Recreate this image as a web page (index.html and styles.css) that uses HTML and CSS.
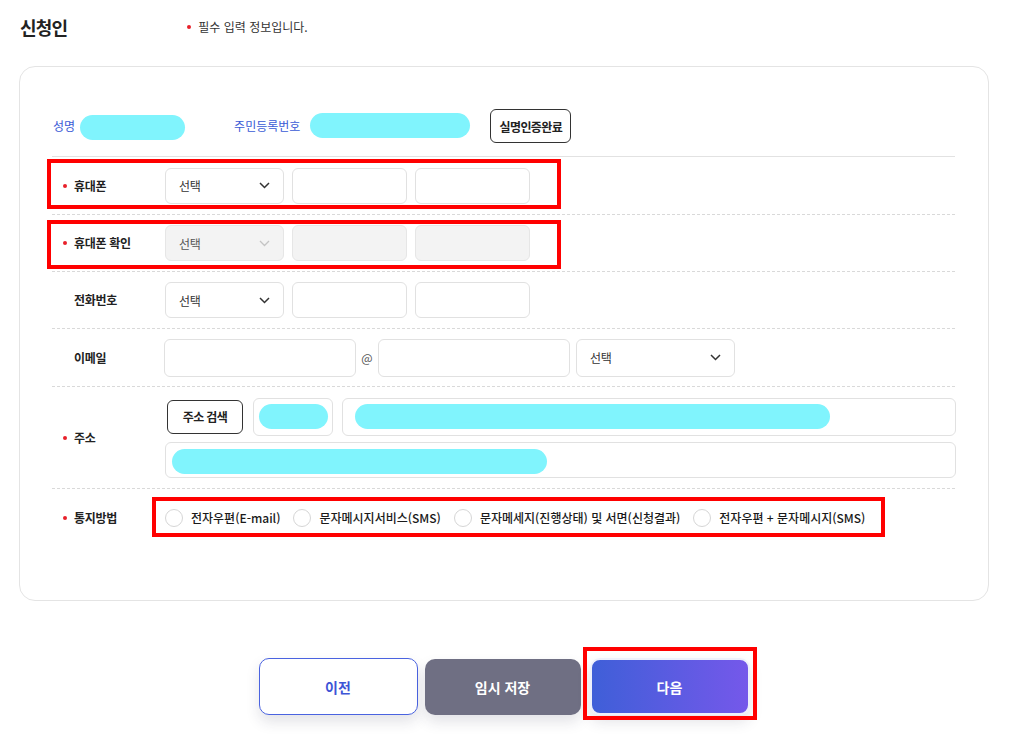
FILE: index.html
```html
<!DOCTYPE html>
<html lang="ko">
<head>
<meta charset="utf-8">
<title>신청인</title>
<link rel="stylesheet" href="styles.css">
</head>
<body>
<div class="page">
  <div class="head">
    <h2 class="title">신청인</h2>
    <p class="notice"><span class="dot"></span>필수 입력 정보입니다.</p>
  </div>

  <div class="card">
    <div class="info">
      <span class="info-label">성명</span>
      <span class="pill pill-name"></span>
      <span class="info-label info-label-id">주민등록번호</span>
      <span class="pill pill-id"></span>
      <button class="btn-outline btn-verify">실명인증완료</button>
    </div>

    <div class="row row-58">
      <div class="label"><span class="dot"></span>휴대폰</div>
      <div class="fields">
        <div class="select w-sel"><span>선택</span><svg width="11" height="7" viewBox="0 0 11 7"><polyline points="1,1 5.5,5.5 10,1" fill="none" stroke="#333" stroke-width="1.5"/></svg></div>
        <div class="input w-num"></div>
        <div class="input w-num"></div>
      </div>
      <div class="hl hl-phone"></div>
    </div>

    <div class="row">
      <div class="label"><span class="dot"></span>휴대폰 확인</div>
      <div class="fields">
        <div class="select w-sel disabled"><span>선택</span><svg width="11" height="7" viewBox="0 0 11 7"><polyline points="1,1 5.5,5.5 10,1" fill="none" stroke="#c4c4c4" stroke-width="1.3"/></svg></div>
        <div class="input w-num disabled"></div>
        <div class="input w-num disabled"></div>
      </div>
      <div class="hl hl-phone2"></div>
    </div>

    <div class="row">
      <div class="label"><span class="nodot"></span>전화번호</div>
      <div class="fields">
        <div class="select w-sel"><span>선택</span><svg width="11" height="7" viewBox="0 0 11 7"><polyline points="1,1 5.5,5.5 10,1" fill="none" stroke="#333" stroke-width="1.5"/></svg></div>
        <div class="input w-num"></div>
        <div class="input w-num"></div>
      </div>
    </div>

    <div class="row row-58">
      <div class="label"><span class="nodot"></span>이메일</div>
      <div class="fields fields-mail">
        <div class="input tall w-mail"></div>
        <span class="at">@</span>
        <div class="input tall w-mail"></div>
        <div class="select tall w-mailsel"><span>선택</span><svg width="11" height="7" viewBox="0 0 11 7"><polyline points="1,1 5.5,5.5 10,1" fill="none" stroke="#333" stroke-width="1.5"/></svg></div>
      </div>
    </div>

    <div class="row row-addr">
      <div class="label"><span class="dot"></span>주소</div>
      <div class="addr">
        <div class="addr-line">
          <button class="btn-outline btn-search">주소 검색</button>
          <div class="input tall w-zip"><span class="pill pill-zip"></span></div>
          <div class="input tall w-addr1"><span class="pill pill-addr1"></span></div>
        </div>
        <div class="input w-addr2"><span class="pill pill-addr2"></span></div>
      </div>
    </div>

    <div class="row row-last">
      <div class="label"><span class="dot"></span>통지방법</div>
      <div class="radios">
        <label class="radio"><span class="circle"></span>전자우편(E-mail)</label>
        <label class="radio"><span class="circle"></span>문자메시지서비스(SMS)</label>
        <label class="radio"><span class="circle"></span>문자메세지(진행상태) 및 서면(신청결과)</label>
        <label class="radio"><span class="circle"></span>전자우편 + 문자메시지(SMS)</label>
      </div>
      <div class="hl hl-radio"></div>
    </div>
  </div>

  <div class="actions">
    <button class="btn btn-prev">이전</button>
    <button class="btn btn-save">임시 저장</button>
    <div class="next-wrap">
      <button class="btn btn-next">다음</button>
      <div class="hl hl-next"></div>
    </div>
  </div>
</div>
</body>
</html>
```

FILE: styles.css
```css
* { box-sizing: border-box; }
html, body { margin: 0; padding: 0; background: #fff; }
body {
  font-family: "Noto Sans CJK KR", "Noto Sans", sans-serif;
  color: #222;
}
.page {
  width: 1016px;
  padding: 0 27px 24px 19px;
}
.head {
  height: 54px;
  display: flex;
  align-items: center;
  padding-left: 1px;
}
.title {
  margin: 0;
  font-size: 18px;
  font-weight: 700;
  letter-spacing: -0.8px;
  line-height: 22px;
  color: #222;
}
.notice {
  margin: 0 0 0 120px;
  font-size: 12px;
  letter-spacing: 0;
  line-height: 16px;
  color: #333;
  display: flex;
  align-items: center;
}
.dot {
  display: inline-block;
  width: 4px;
  height: 4px;
  border-radius: 50%;
  background: #e8202a;
  margin-right: 7px;
  flex: none;
}
.nodot {
  display: inline-block;
  width: 4px;
  margin-right: 7px;
}
.card {
  margin-top: 12px;
  width: 970px;
  border: 1px solid #e4e4e4;
  border-radius: 16px;
  padding: 42px 33px 54px 32px;
}
.info {
  display: flex;
  align-items: center;
  padding-bottom: 13px;
  border-bottom: 1px solid #e2e2e2;
  padding-left: 1px;
  box-sizing: content-box;
  height: 34px;
}
.info-label {
  font-size: 12px;
  letter-spacing: 0;
  color: #3a5bd6;
  line-height: 16px;
}
.info-label-id { margin-left: 49px; }
.pill {
  display: block;
  background: #80f4fd;
  border-radius: 13px;
  height: 25px;
}
.pill-name { width: 105px; margin-left: 5px; margin-top: 2px; }
.pill-id { width: 160px; margin-left: 10px; margin-top: -2px; }
.btn-outline {
  font-family: inherit;
  background: #fff;
  border: 1px solid #333;
  border-radius: 6px;
  font-size: 12px;
  font-weight: 700;
  letter-spacing: -0.6px;
  color: #222;
  padding: 0;
  cursor: pointer;
}
.btn-verify { width: 81px; height: 34px; margin-left: 20px; }

.row {
  position: relative;
  display: flex;
  align-items: center;
  height: 57px;
  border-bottom: 1px dashed #d9d9d9;
}
.row-58 { height: 58px; }
.row-addr { height: 102px; align-items: center; }
.row-last { border-bottom: none; }
.label {
  width: 112px;
  flex: none;
  padding-left: 11px;
  font-size: 12px;
  font-weight: 700;
  letter-spacing: -0.3px;
  line-height: 16px;
  color: #222;
  display: flex;
  align-items: center;
}
.fields {
  display: flex;
  align-items: center;
  gap: 8px;
  padding-left: 1px;
}
.fields-mail { gap: 6px; padding-left: 0; }
.input, .select {
  height: 36px;
  border: 1px solid #e1e1e1;
  border-radius: 6px;
  background: #fff;
  flex: none;
}
.tall { height: 38px; }
.select {
  display: flex;
  align-items: center;
  justify-content: space-between;
  padding: 0 13px 0 13px;
  font-size: 12px;
  letter-spacing: -0.3px;
  color: #333;
}
.select svg { display: block; }
.disabled { background: #f3f3f3; border-color: #e6e6e6; }
.select.disabled { color: #555; }
.w-sel { width: 119px; }
.w-num { width: 115px; }
.w-mail { width: 192px; }
.w-mailsel { width: 159px; margin-left: 0; }
.at {
  font-size: 12px;
  color: #555;
  width: 14px;
  text-align: center;
  margin: 0 -2px;
}
.addr {
  display: flex;
  flex-direction: column;
  gap: 6px;
  flex: 1;
  padding-left: 1px;
}
.addr-line {
  display: flex;
  align-items: center;
  gap: 9px;
}
.btn-search { width: 76px; height: 34px; margin-left: 2px; margin-right: 1px; }
.w-zip { width: 80px; padding: 5px; }
.w-addr1 { flex: 1; padding: 5px 12px; }
.w-addr2 { width: 791px; padding: 6px 6px; height: 36px; }
.pill-zip { width: 69px; }
.pill-addr1 { width: 475px; }
.pill-addr2 { width: 375px; height: 25px; }

.radios {
  display: flex;
  align-items: center;
  padding-left: 1px;
}
.radio {
  display: flex;
  align-items: center;
  font-size: 12px;
  font-weight: 500;
  letter-spacing: 0;
  color: #1a1a1a;
  margin-right: 13px;
  line-height: 16px;
}
.circle {
  width: 18px;
  height: 18px;
  border: 1px solid #d6d6d6;
  border-radius: 50%;
  background: #fff;
  margin-right: 8px;
  flex: none;
}

.hl {
  position: absolute;
  border: 4px solid #ff0000;
  pointer-events: none;
}
.hl-phone { left: -5px; top: 2px; width: 514px; height: 50px; }
.hl-phone2 { left: -5px; top: 5px; width: 514px; height: 49px; }
.hl-radio { left: 100px; top: 8px; width: 733px; height: 40px; }

.actions {
  width: 970px;
  display: flex;
  justify-content: center;
  align-items: center;
  gap: 7px;
  margin-top: 57px;
}
.btn {
  font-family: inherit;
  width: 157px;
  height: 56px;
  border-radius: 10px;
  font-size: 14px;
  font-weight: 700;
  letter-spacing: 0;
  cursor: pointer;
  box-shadow: 0 7px 14px rgba(40, 40, 70, 0.13);
  padding: 0;
}
.btn-prev { background: #fff; border: 1px solid #4a63e0; color: #3d55d6; width: 159px; height: 57px; }
.btn-save { background: #6f6f83; border: none; color: #fff; width: 156px; }
.next-wrap { position: relative; margin-left: 2px; }
.btn-next {
  display: block;
  background: linear-gradient(90deg, #3f5fd8 0%, #7558ea 100%);
  border: 2px solid #eef0fb;
  color: #fff;
  width: 160px;
  height: 57px;
}
.hl-next { left: -7px; top: -11px; width: 174px; height: 73px; }
```
